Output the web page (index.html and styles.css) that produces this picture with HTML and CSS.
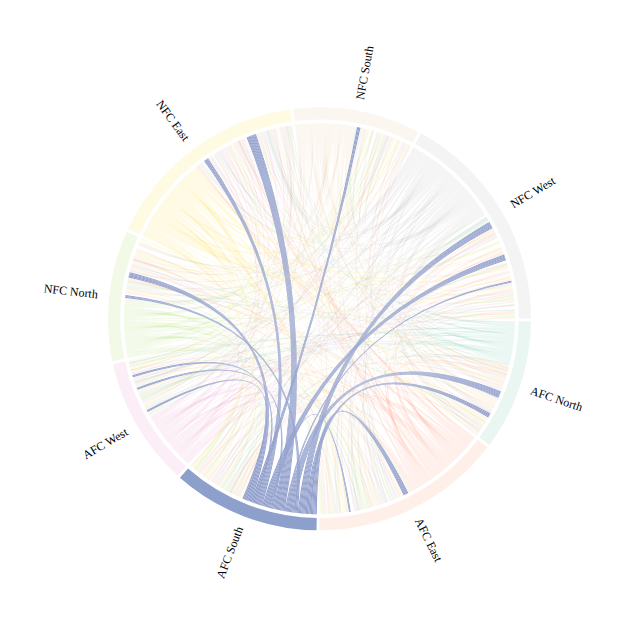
FILE: index.html
```html
<!DOCTYPE html>
<html>
<head>
<meta charset="utf-8">
<title>Division chord diagram</title>
<link rel="stylesheet" href="styles.css">
</head>
<body>
<svg class="chart" width="640" height="640" viewBox="0 0 640 640">
  <g id="root" transform="translate(319.5 318.8)">
    <g id="arcs"></g>
    <g id="faint"></g>
    <g id="hi"></g>
    <g class="labels">
      <text class="label" dy=".35em" transform="rotate(18.65) translate(223)">AFC North</text>
      <text class="label" dy=".35em" transform="rotate(63.7) translate(223)">AFC East</text>
      <text class="label label-flip" dy=".35em" transform="rotate(111.05) translate(223) rotate(180)">AFC South</text>
      <text class="label label-flip" dy=".35em" transform="rotate(149.85) translate(223) rotate(180)">AFC West</text>
      <text class="label label-flip" dy=".35em" transform="rotate(186.35) translate(223) rotate(180)">NFC North</text>
      <text class="label label-flip" dy=".35em" transform="rotate(233.55) translate(223) rotate(180)">NFC East</text>
      <text class="label" dy=".35em" transform="rotate(-79.65) translate(223)">NFC South</text>
      <text class="label" dy=".35em" transform="rotate(-30.7) translate(223)">NFC West</text>
    </g>
  </g>
</svg>
<script src="main.js"></script>
</body>
</html>
```

FILE: styles.css
```css
html, body {
  margin: 0;
  padding: 0;
  background: #ffffff;
}
.chart {
  display: block;
}
.c0 { fill: #66c2a5; }
.c1 { fill: #fc8d62; }
.c2 { fill: #8da0cb; }
.c3 { fill: #e78ac3; }
.c4 { fill: #a6d854; }
.c5 { fill: #ffd92f; }
.c6 { fill: #e5c494; }
.c7 { fill: #b3b3b3; }
.arc {
  fill-opacity: 0.14;
}
.arc-hi {
  fill-opacity: 1;
}
.rib {
  fill-opacity: 0.13;
}
.rib-hi {
  fill: #8b9aca;
  fill-opacity: 1;
  stroke: #ffffff;
  stroke-width: 0.2;
  stroke-opacity: 0.3;
}
.label {
  font-family: "Liberation Serif", "Times New Roman", serif;
  font-size: 12px;
  fill: #000000;
}
.label-flip {
  text-anchor: end;
}
```

FILE: main.js
```js
(function () {
  var NS = 'http://www.w3.org/2000/svg';
  var RC = 195.5, RA0 = 199.2, RA1 = 211.5, PAD = 0.4, U = 0.4, HI = 2, TEAMS = 4;
  var G = [
    {s: 90.3, e: 127, split: 104},
    {s: 127, e: 180.4, split: 152},
    {s: 180.4, e: 221.7, split: 203.2},
    {s: 221.7, e: 258, split: 240},
    {s: 258, e: 294.7, split: 275.5},
    {s: 294.7, e: 352.4, split: 321},
    {s: 352.4, e: 388.3, split: 370.6},
    {s: 388.3, e: 450.3, split: 417.5}
  ];
  G.forEach(function (g) { g.a0 = g.s + PAD; g.a1 = g.e - PAD; });

  function mulberry32(a) {
    return function () {
      a |= 0; a = a + 0x6D2B79F5 | 0;
      var t = Math.imul(a ^ a >>> 15, 1 | a);
      t = t + Math.imul(t ^ t >>> 7, 61 | t) ^ t;
      return ((t ^ t >>> 14) >>> 0) / 4294967296;
    };
  }
  var rnd = mulberry32(20240611);

  function pt(r, a) {
    var t = a * Math.PI / 180;
    return (r * Math.sin(t)).toFixed(2) + ' ' + (-r * Math.cos(t)).toFixed(2);
  }
  function arcPath(a0, a1) {
    var large = a1 - a0 > 180 ? 1 : 0;
    return 'M' + pt(RA1, a0) + 'A' + RA1 + ' ' + RA1 + ' 0 ' + large + ' 1 ' + pt(RA1, a1) +
      'L' + pt(RA0, a1) + 'A' + RA0 + ' ' + RA0 + ' 0 ' + large + ' 0 ' + pt(RA0, a0) + 'Z';
  }
  function ribbon(s0, s1, t0, t1) {
    return 'M' + pt(RC, s0) + 'A' + RC + ' ' + RC + ' 0 0 1 ' + pt(RC, s1) +
      'Q0 0 ' + pt(RC, t0) + 'A' + RC + ' ' + RC + ' 0 0 1 ' + pt(RC, t1) +
      'Q0 0 ' + pt(RC, s0) + 'Z';
  }
  function mod(a, m) { return ((a % m) + m) % m; }
  function add(parent, d, cls) {
    var p = document.createElementNS(NS, 'path');
    p.setAttribute('d', d);
    p.setAttribute('class', cls);
    parent.appendChild(p);
  }

  var arcs = document.getElementById('arcs');
  var faint = document.getElementById('faint');
  var hi = document.getElementById('hi');

  G.forEach(function (g, gi) {
    add(arcs, arcPath(g.a0, g.a1), 'arc c' + gi + (gi === HI ? ' arc-hi' : ''));
  });

  /* highlighted (AFC South) chords: [target group, start, end, source team] */
  var BLUE = [
    [0, 111.8, 113.8, 1], [0, 119.0, 120.3, 0],
    [1, 153.0, 154.5, 0], [1, 170.8, 171.3, 2],
    [3, 241.5, 242.1, 3], [3, 248.7, 249.3, 1], [3, 252.6, 253.2, 2],
    [4, 276.2, 277.0, 0], [4, 282.2, 283.8, 3],
    [5, 323.8, 325.2, 2], [5, 338.1, 341.0, 1],
    [6, 371.1, 372.1, 3],
    [7, 420.3, 422.3, 0], [7, 430.8, 432.6, 2], [7, 438.8, 439.3, 1]
  ];

  /* faint chords */
  var outs = [];
  G.forEach(function (g, gi) {
    if (gi === HI) return;
    var len = g.split - g.a0, n = Math.round(len / U), w = len / n;
    for (var k = 0; k < n; k++) {
      outs.push({g: gi, team: Math.floor(k * TEAMS / n), a0: g.a0 + k * w, a1: g.a0 + (k + 1) * w});
    }
  });
  var segs = [];
  G.forEach(function (g, gi) {
    var cuts = BLUE.filter(function (b) { return b[0] === gi; })
      .map(function (b) { return [b[1], b[2]]; })
      .sort(function (a, b) { return a[0] - b[0]; });
    var cur = g.split;
    cuts.forEach(function (c) {
      if (c[0] > cur) segs.push({g: gi, a0: cur, a1: c[0]});
      cur = c[1];
    });
    if (g.a1 > cur) segs.push({g: gi, a0: cur, a1: g.a1});
  });
  var L = 0;
  segs.forEach(function (s) { L += s.a1 - s.a0; });
  var N = outs.length, cum = 0, prev = 0, slots = [];
  segs.forEach(function (sg) {
    cum += sg.a1 - sg.a0;
    var upto = Math.round(cum / L * N), n = upto - prev;
    prev = upto;
    if (n <= 0) return;
    var w = (sg.a1 - sg.a0) / n;
    for (var k = 0; k < n; k++) slots.push({g: sg.g, a0: sg.a0 + k * w, a1: sg.a0 + (k + 1) * w});
  });
  var i, j, t;
  for (i = slots.length - 1; i > 0; i--) {
    j = Math.floor(rnd() * (i + 1));
    t = slots[i]; slots[i] = slots[j]; slots[j] = t;
  }
  for (i = 0; i < N; i++) {
    if (slots[i].g === outs[i].g) {
      for (var tries = 0; tries < 200; tries++) {
        j = Math.floor(rnd() * N);
        if (slots[j].g !== outs[i].g && slots[i].g !== outs[j].g) {
          t = slots[i]; slots[i] = slots[j]; slots[j] = t;
          break;
        }
      }
    }
    outs[i].slot = slots[i];
  }
  G.forEach(function (g, gi) {
    if (gi === HI) return;
    for (var tm = 0; tm < TEAMS; tm++) {
      var mine = outs.filter(function (o) { return o.g === gi && o.team === tm; });
      var ss = mine.map(function (o) {
        var m = (o.slot.a0 + o.slot.a1) / 2;
        return {slot: o.slot, key: mod(m - g.a1, 360) + (rnd() - 0.5) * 24};
      }).sort(function (a, b) { return b.key - a.key; });
      mine.forEach(function (o, k) { o.slot = ss[k].slot; });
    }
  });
  outs.forEach(function (o) {
    add(faint, ribbon(o.a0, o.a1, o.slot.a0, o.slot.a1), 'rib c' + o.g);
  });

  /* blue chords: each chord leaves from one AFC South team block */
  var src = G[HI];
  var W = 0;
  BLUE.forEach(function (b) { W += b[2] - b[1]; });
  var scale = (src.split - src.a0) / W, pos = src.a0;
  for (var tm = 0; tm < TEAMS; tm++) {
    var mine = BLUE.filter(function (b) { return b[3] === tm; }).map(function (b) {
      return {t0: b[1], t1: b[2], key: mod((b[1] + b[2]) / 2 - src.a1, 360)};
    }).sort(function (a, c) { return c.key - a.key; });
    mine.forEach(function (b) {
      var wt = b.t1 - b.t0, ws = wt * scale;
      var n = Math.max(1, Math.round(wt / 0.3));
      for (var k = 0; k < n; k++) {
        var s0 = pos + k * ws / n, s1 = pos + (k + 1) * ws / n;
        var t1 = b.t1 - k * wt / n, t0 = b.t1 - (k + 1) * wt / n;
        add(hi, ribbon(s0, s1, t0, t1), 'rib-hi');
      }
      pos += ws;
    });
  }
})();
```
